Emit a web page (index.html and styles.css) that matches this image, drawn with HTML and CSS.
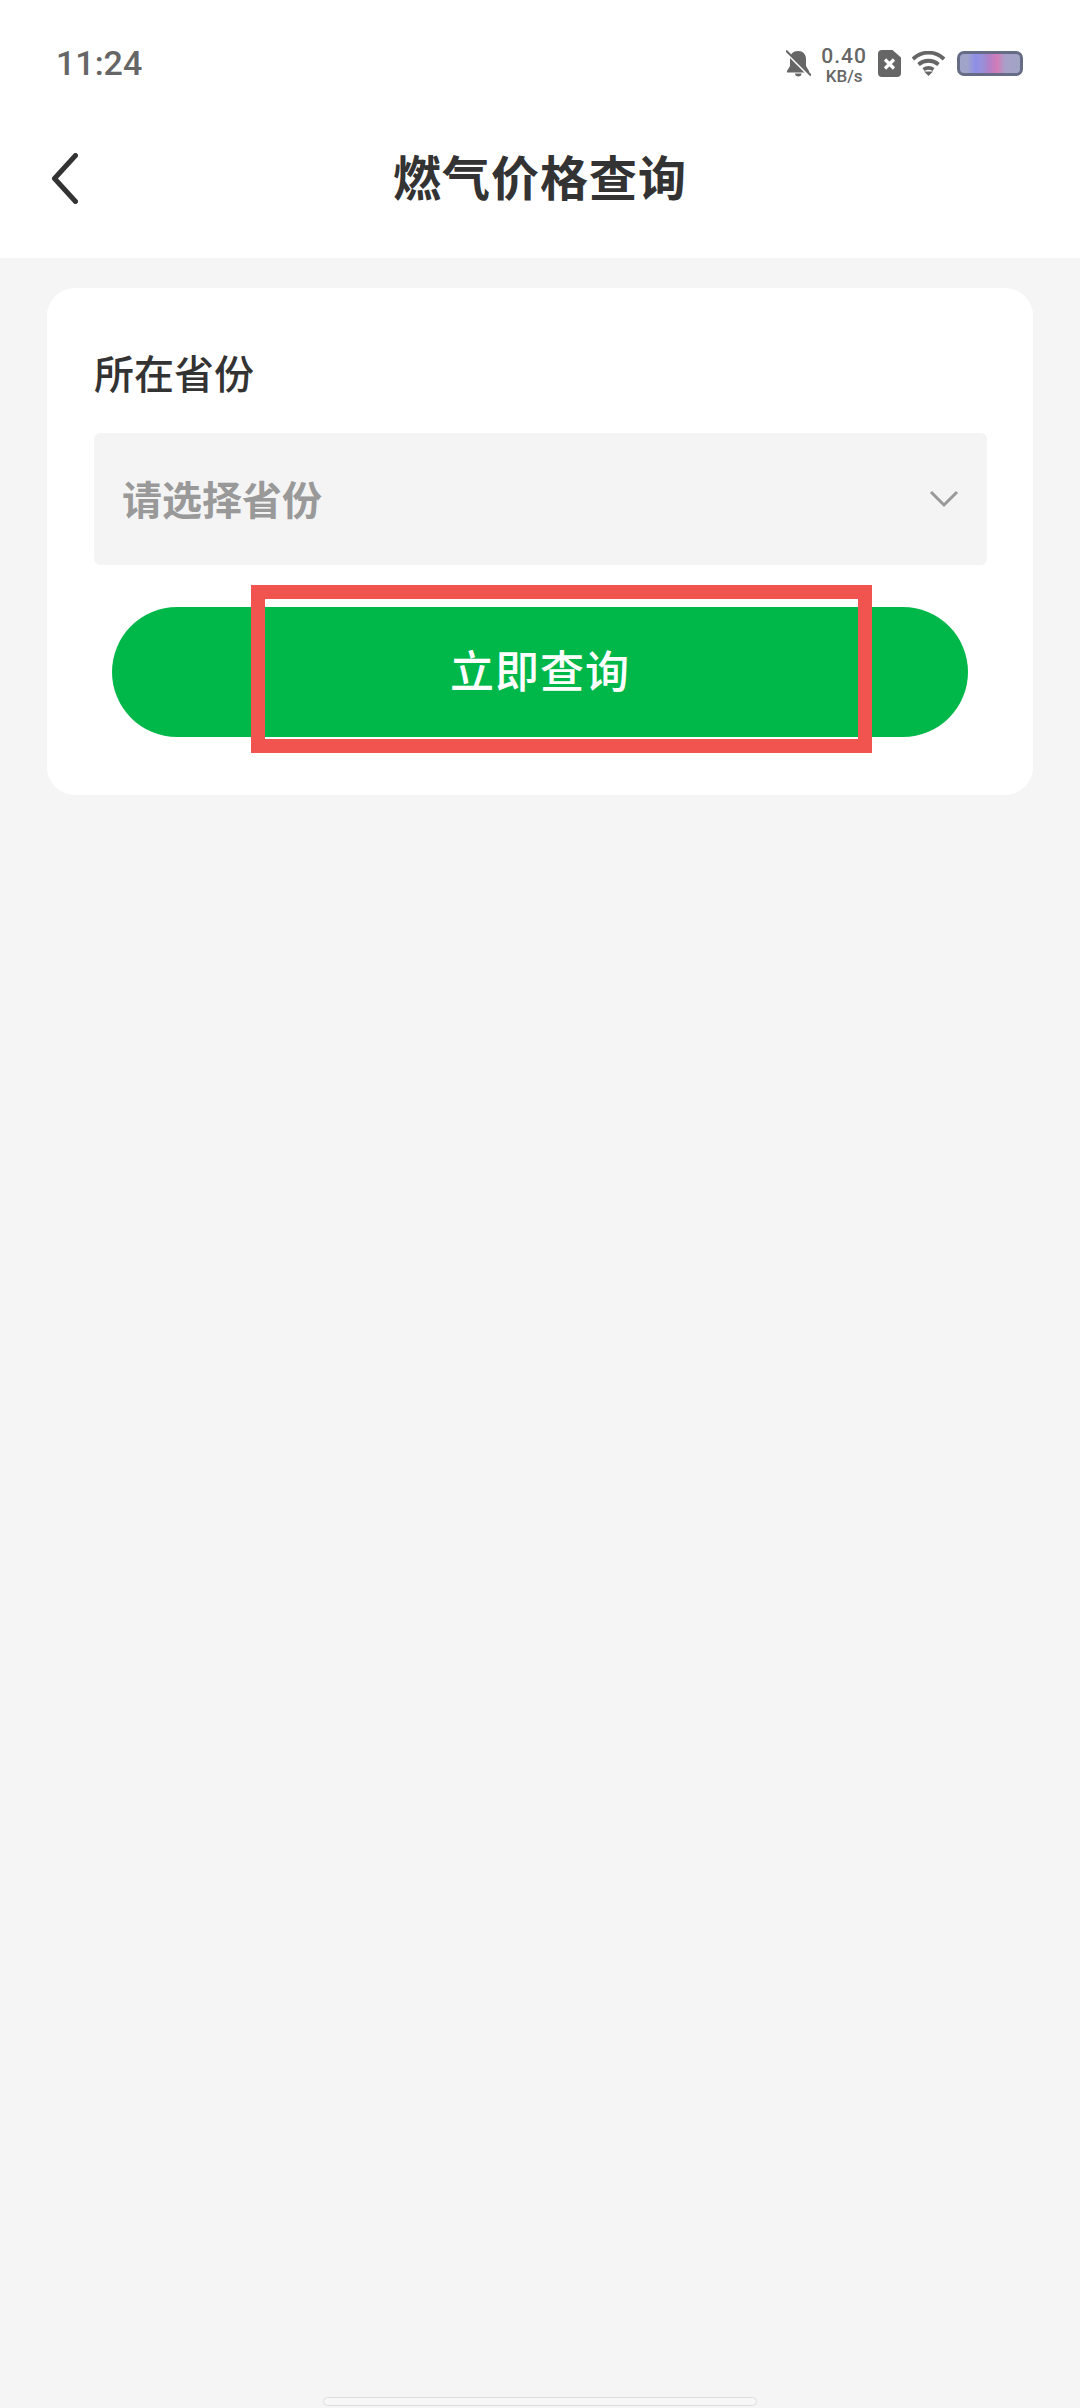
FILE: index.html
```html
<!DOCTYPE html>
<html lang="zh-CN">
<head>
    <meta charset="UTF-8">
    <meta name="viewport" content="width=device-width, initial-scale=1.0">
    <title>燃气价格查询</title>
    <link rel="stylesheet" href="styles.css">
</head>
<body>
    <!-- Status bar -->
    <div class="status-bar">
        <span class="time">11:24</span>
        <div class="status-icons">
            <svg width="25" height="27" viewBox="0 0 25 27">
                <path d="M12 1c-5 0-8 3.500-8 8v7l-3 5v1.500h22v-1.500l-3-5v-7c0-4.500-3-8-8-8z" fill="#666"/>
                <path d="M9 23.500h6.500c0 2-1.300 3-3.200 3s-3.300-1-3.300-3z" fill="#666"/>
                <path d="M0 2l24 24" stroke="#fff" stroke-width="3"/>
                <path d="M0 0.500l25 25" stroke="#666" stroke-width="2"/>
            </svg>
            <div class="speed">
                <span class="speed-value">0.40</span>
                <span class="speed-unit">KB/s</span>
            </div>
            <svg width="23" height="27" viewBox="0 0 23 27">
                <path d="M4 0h10.500l8.500 7.500v15.500a4 4 0 0 1-4 4H4a4 4 0 0 1-4-4V4a4 4 0 0 1 4-4z" fill="#666"/>
                <path d="M7 9.500l9 9M16 9.500l-9 9" stroke="#fff" stroke-width="3.200"/>
            </svg>
            <svg class="wifi" width="33" height="25" viewBox="0 0 33 25" fill="none" stroke="#666" stroke-width="3.800">
                <path d="M1 8c9-8.500 22-8.500 31 0"/>
                <path d="M6.500 13.500c6-5 14-5 20 0"/>
                <path d="M11.500 18.500c3-2 7-2 10 0"/>
                <path d="M12 20.500h9l-4.500 4.500z" fill="#666" stroke="none"/>
            </svg>
            <div class="battery"></div>
        </div>
    </div>

    <!-- Title bar -->
    <div class="title-bar">
        <svg class="back" width="26" height="51" viewBox="0 0 26 51" fill="none">
            <path d="M23.500 2.500L2.500 25.500l21 23" stroke="#333" stroke-width="5" stroke-linecap="round" stroke-linejoin="round"/>
        </svg>
        <h1>燃气价格查询</h1>
    </div>

    <!-- Query form -->
    <div class="card">
        <div class="label">所在省份</div>
        <div class="select">
            <span>请选择省份</span>
            <svg width="30" height="18" viewBox="0 0 30 18" fill="none">
                <path d="M2 2l13 13L28 2" stroke="#999" stroke-width="3"/>
            </svg>
        </div>
        <div class="query-wrap">
            <button class="query">立即查询</button>
            <div class="highlight"></div>
        </div>
    </div>

    <div class="home-bar"></div>
</body>
</html>
```

FILE: styles.css
```css
html, body {
    margin: 0;
    height: 2408px;
}
body {
    display: flex;
    flex-direction: column;
    overflow: hidden;
    background-color: #f5f5f5;
    font-family: "Noto Sans CJK SC", "Noto Sans", sans-serif;
    color: #333;
}
.status-bar {
    display: flex;
    justify-content: space-between;
    align-items: center;
    height: 126px;
    padding: 0 57px 0 56px;
    background-color: #fff;
    box-sizing: border-box;
}
.time {
    font-family: Roboto, sans-serif;
    font-size: 34px;
    font-weight: 500;
    color: #666;
}
.status-icons {
    display: flex;
    align-items: center;
}
.speed {
    display: flex;
    flex-direction: column;
    align-items: center;
    margin: 3px 11px 0 10px;
    font-family: Roboto, sans-serif;
    font-weight: 500;
    color: #666;
}
.speed-value {
    font-size: 21px;
    line-height: 22px;
    letter-spacing: 1px;
}
.speed-unit {
    font-size: 17px;
    line-height: 18px;
}
.wifi {
    margin-left: 11px;
}
.battery {
    width: 66px;
    height: 25px;
    margin-left: 12px;
    border: 3px solid #666c86;
    border-radius: 7px;
    box-sizing: border-box;
    background: linear-gradient(90deg, #a0a4c8 0%, #a0a4c8 12%, #8f8fe8 25%, #9a90d8 38%, #b080c8 48%, #d27cb8 62%, #a8a0c8 75%, #a0a4c4 100%);
}
.title-bar {
    display: grid;
    grid-template-columns: 1fr auto 1fr;
    align-items: center;
    height: 132px;
    padding-bottom: 28px;
    background-color: #fff;
    box-sizing: border-box;
}
.title-bar h1 {
    margin: -6px 0 0;
    font-size: 48px;
    font-weight: 700;
    letter-spacing: 1px;
    color: #333;
}
.back {
    margin-left: 52px;
}
.card {
    margin: 30px 47px 0;
    padding: 0 46px 58px 47px;
    background-color: #fff;
    border-radius: 28px;
}
.label {
    padding-top: 60px;
    height: 85px;
    font-size: 40px;
    font-weight: 500;
    line-height: 48px;
    color: #333;
}
.select {
    display: flex;
    align-items: center;
    justify-content: space-between;
    height: 132px;
    padding: 0 28px;
    background-color: #f4f4f4;
    border-radius: 6px;
    font-size: 40px;
    font-weight: 700;
    color: #999;
}
.select span {
    margin-top: -2px;
}
.query-wrap {
    position: relative;
    margin: 42px 19px 0 18px;
}
.query {
    display: block;
    width: 100%;
    height: 130px;
    padding: 0 0 7px;
    border: none;
    border-radius: 65px;
    background-color: #00b84a;
    color: #fff;
    font-family: inherit;
    font-size: 44px;
    font-weight: 500;
    letter-spacing: 1px;
}
.highlight {
    position: absolute;
    left: 139px;
    top: -22px;
    width: 621px;
    height: 168px;
    border: 14px solid #f1544e;
    box-sizing: border-box;
}
.home-bar {
    align-self: center;
    width: 434px;
    height: 9px;
    margin-top: auto;
    margin-bottom: 2px;
    background-color: #f7f7f7;
    border: 1px solid #ddd;
    border-radius: 5px;
    box-sizing: border-box;
}
```
